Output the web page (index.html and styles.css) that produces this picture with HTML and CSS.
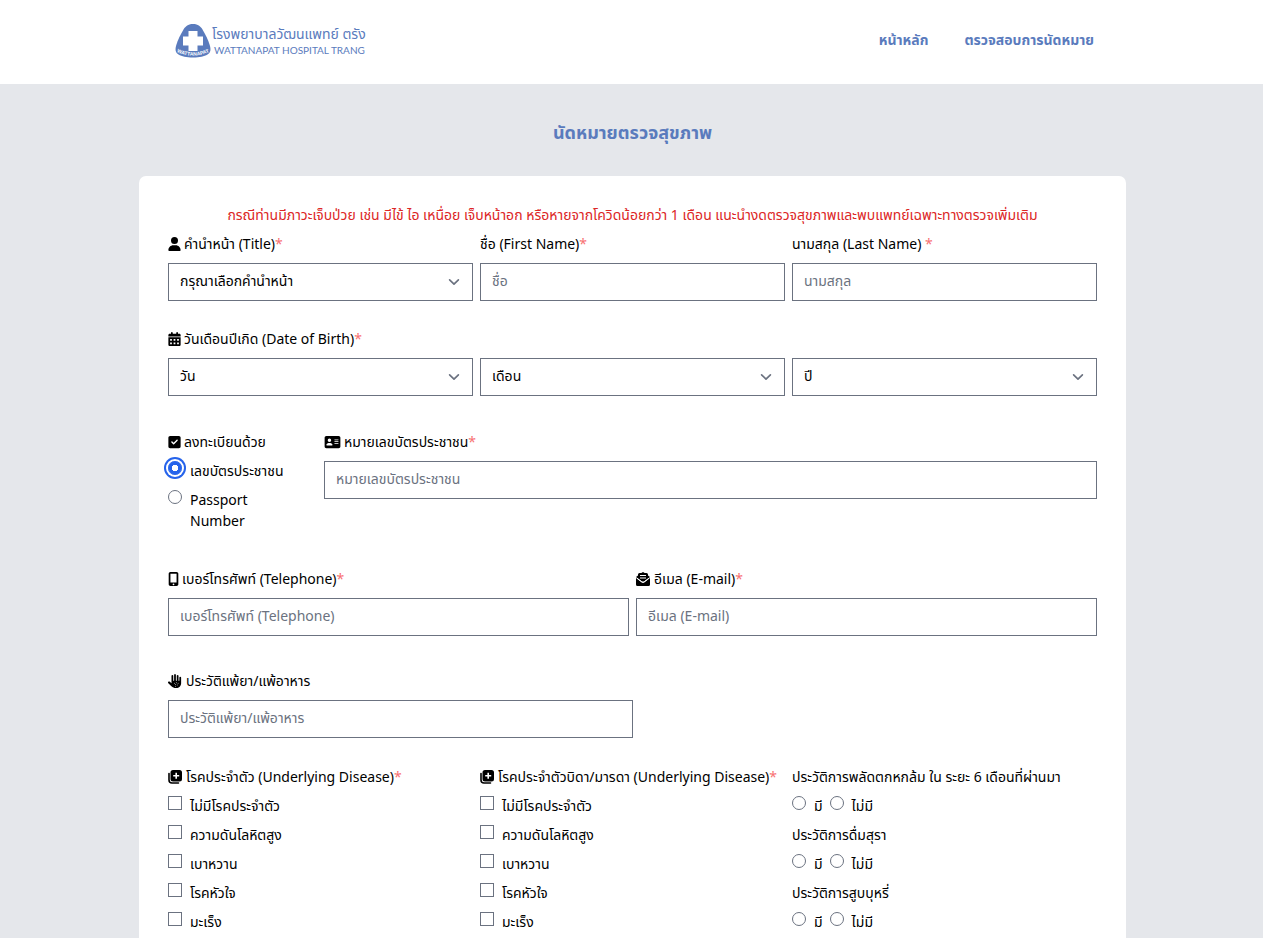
FILE: index.html
```html
<!DOCTYPE html>
<html lang="th">
<head>
<meta charset="utf-8">
<meta name="viewport" content="width=device-width, initial-scale=1">
<title>นัดหมายตรวจสุขภาพ</title>
<link rel="stylesheet" href="styles.css">
</head>
<body>
<svg class="sprite" aria-hidden="true">
  <symbol id="plus-copy" viewBox="0 0 14 14">
    <path d="M1 3.500v6.500A3 3 0 0 0 4 13H10.500" fill="none" stroke="currentColor" stroke-width="1.600" stroke-linecap="round"/>
    <path fill-rule="evenodd" d="M5 0h6.500a2.500 2.500 0 0 1 2.500 2.500v6.500a2.500 2.500 0 0 1-2.500 2.500H5a2.500 2.500 0 0 1-2.500-2.500V2.500A2.500 2.500 0 0 1 5 0zM7.400 2.800v2.200H5.200v1.600h2.200v2.200h1.600v-2.200h2.200V5H9V2.800z"/>
  </symbol>
</svg>
<header class="header">
  <a class="logo" href="#">
    <svg class="emblem" viewBox="0 0 36 34" aria-hidden="true">
      <path class="emblem-shape" d="M18 0c4 0 7 1.500 9.500 5.500C30.500 10.500 33.500 16.500 35 22c1 4 .5 6.500-2.500 8.500C29 32.500 25 33.500 18 33.500S7 32.500 3.500 30.500C.5 28.500 0 26 1 22 2.500 16.500 5.500 10.500 8.500 5.500 11 1.500 14 0 18 0z"/>
      <path class="emblem-cross" d="M13.500 7h9v5.500H28v9h-5.500V27h-9v-5.500H8v-9h5.500z"/>
      <path id="arc" d="M3 28.500Q18 35 33 28.500" fill="none"/>
      <text class="emblem-text"><textPath href="#arc" startOffset="50%" text-anchor="middle">WATTANAPAT</textPath></text>
    </svg>
    <span class="wordmark">
      <span class="wordmark-th">โรงพยาบาลวัฒนแพทย์ ตรัง</span>
      <span class="wordmark-en">WATTANAPAT HOSPITAL TRANG</span>
    </span>
  </a>
  <nav class="nav">
    <a href="#">หน้าหลัก</a>
    <a href="#">ตรวจสอบการนัดหมาย</a>
  </nav>
</header>
<main class="main">
  <h1 class="title">นัดหมายตรวจสุขภาพ</h1>
  <form class="card">
    <p class="notice">กรณีท่านมีภาวะเจ็บป่วย เช่น มีไข้ ไอ เหนื่อย เจ็บหน้าอก หรือหายจากโควิดน้อยกว่า 1 เดือน แนะนำงดตรวจสุขภาพและพบแพทย์เฉพาะทางตรวจเพิ่มเติม</p>

    <div class="row thirds">
      <div class="field">
        <label class="label" for="title"><svg class="icon" viewBox="0 0 448 512"><path d="M224 256A128 128 0 1 0 224 0a128 128 0 1 0 0 256zm-45.700 48C79.800 304 0 383.800 0 482.300C0 498.700 13.300 512 29.700 512H418.300c16.400 0 29.700-13.300 29.700-29.700C448 383.800 368.200 304 269.700 304H178.300z"/></svg>คำนำหน้า (Title)<span class="req">*</span></label>
        <select class="control" id="title"><option>กรุณาเลือกคำนำหน้า</option></select>
      </div>
      <div class="field">
        <label class="label" for="first">ชื่อ (First Name)<span class="req">*</span></label>
        <input class="control" id="first" type="text" placeholder="ชื่อ">
      </div>
      <div class="field">
        <label class="label" for="last">นามสกุล (Last Name) <span class="req">*</span></label>
        <input class="control" id="last" type="text" placeholder="นามสกุล">
      </div>
    </div>

    <div class="field birth">
      <label class="label" for="day"><svg class="icon" viewBox="0 0 448 512"><path fill-rule="evenodd" d="M128 0c17.700 0 32 14.300 32 32V64H288V32c0-17.700 14.300-32 32-32s32 14.300 32 32V64h48c26.500 0 48 21.500 48 48v48H0V112C0 85.500 21.500 64 48 64H96V32c0-17.700 14.300-32 32-32zM0 192H448V464c0 26.500-21.500 48-48 48H48c-26.500 0-48-21.500-48-48zM64 256v64h64v-64zM192 256v64h64v-64zM320 256v64h64v-64zM64 384v64h64v-64zM192 384v64h64v-64zM320 384v64h64v-64z"/></svg>วันเดือนปีเกิด (Date of Birth)<span class="req">*</span></label>
      <div class="thirds">
        <select class="control" id="day"><option>วัน</option></select>
        <select class="control" aria-label="เดือน"><option>เดือน</option></select>
        <select class="control" aria-label="ปี"><option>ปี</option></select>
      </div>
    </div>

    <div class="row identity">
      <fieldset class="options narrow">
        <legend class="label"><svg class="icon" viewBox="0 0 448 512"><path d="M64 32C28.700 32 0 60.700 0 96V416c0 35.300 28.700 64 64 64H384c35.300 0 64-28.700 64-64V96c0-35.300-28.700-64-64-64H64zM337 209L209 337c-9.400 9.400-24.600 9.400-33.900 0l-64-64c-9.400-9.400-9.400-24.600 0-33.900s24.600-9.400 33.900 0l47 47L303 175c9.400-9.400 24.600-9.400 33.900 0s9.400 24.600 0 33.900z"/></svg>ลงทะเบียนด้วย</legend>
        <label class="option"><input type="radio" name="idtype" checked>เลขบัตรประชาชน</label>
        <label class="option"><input type="radio" name="idtype">Passport Number</label>
      </fieldset>
      <div class="field">
        <label class="label" for="idno"><svg class="icon icon-wide" viewBox="0 0 576 512"><path d="M64 32C28.700 32 0 60.700 0 96V416c0 35.300 28.700 64 64 64H512c35.300 0 64-28.700 64-64V96c0-35.300-28.700-64-64-64H64zm80 256h64c44.200 0 80 35.800 80 80c0 8.800-7.200 16-16 16H80c-8.800 0-16-7.200-16-16c0-44.200 35.800-80 80-80zm-32-96a64 64 0 1 1 128 0 64 64 0 1 1 -128 0zm256-32H496c8.800 0 16 7.200 16 16s-7.200 16-16 16H368c-8.800 0-16-7.200-16-16s7.200-16 16-16zm0 64H496c8.800 0 16 7.200 16 16s-7.200 16-16 16H368c-8.800 0-16-7.200-16-16s7.200-16 16-16zm0 64H496c8.800 0 16 7.200 16 16s-7.200 16-16 16H368c-8.800 0-16-7.200-16-16s7.200-16 16-16z"/></svg>หมายเลขบัตรประชาชน<span class="req">*</span></label>
        <input class="control" id="idno" type="text" placeholder="หมายเลขบัตรประชาชน">
      </div>
    </div>

    <div class="row halves">
      <div class="field">
        <label class="label" for="tel"><svg class="icon icon-slim" viewBox="0 0 384 512"><path fill-rule="evenodd" d="M16 64C16 28.700 44.700 0 80 0H304c35.300 0 64 28.700 64 64V448c0 35.300-28.700 64-64 64H80c-35.300 0-64-28.700-64-64zM224 448a32 32 0 1 0 -64 0 32 32 0 1 0 64 0zM304 64H80V384H304z"/></svg>เบอร์โทรศัพท์ (Telephone)<span class="req">*</span></label>
        <input class="control" id="tel" type="tel" placeholder="เบอร์โทรศัพท์ (Telephone)">
      </div>
      <div class="field">
        <label class="label" for="email"><svg class="icon icon-square" viewBox="0 0 14 14"><path d="M0 6v6.500A1.500 1.500 0 0 0 1.500 14h11a1.500 1.500 0 0 0 1.500-1.500V6L8.500 10.200a2.500 2.500 0 0 1-3 0z"/><path d="M0 5L2 3.500V6.500zM14 5L12 3.500V6.500zM4.500 1.500L7 0l2.500 1.500z"/><path fill-rule="evenodd" d="M3.500 1h7A1.500 1.500 0 0 1 12 2.500V6.500L8 9.500a1.700 1.700 0 0 1-2 0L2 6.500V2.500A1.500 1.500 0 0 1 3.500 1zM4 3v1h6V3zM4 5.500v1h6v-1z"/><path class="cut-line" d="M1 6.200L5.700 9.800a2.200 2.200 0 0 0 2.600 0L13 6.200"/></svg>อีเมล (E-mail)<span class="req">*</span></label>
        <input class="control" id="email" type="email" placeholder="อีเมล (E-mail)">
      </div>
    </div>

    <div class="field allergy">
      <label class="label" for="allergy"><svg class="icon icon-square" viewBox="0 0 512 512"><path d="M288 32c0-17.700-14.300-32-32-32s-32 14.300-32 32V240c0 8.800-7.200 16-16 16s-16-7.200-16-16V64c0-17.700-14.300-32-32-32s-32 14.300-32 32V336c0 1.500 0 3.100 .1 4.600L67.600 283c-16-15.200-41.300-14.600-56.600 1.400s-14.600 41.300 1.400 56.600L124.800 448c43.100 41.100 100.400 64 160 64H304c97.200 0 176-78.800 176-176V128c0-17.700-14.300-32-32-32s-32 14.300-32 32V240c0 8.800-7.200 16-16 16s-16-7.200-16-16V64c0-17.700-14.300-32-32-32s-32 14.300-32 32V240c0 8.800-7.200 16-16 16s-16-7.200-16-16V32z"/><g class="cut"><circle cx="240" cy="336" r="16"/><circle cx="304" cy="320" r="16"/><circle cx="368" cy="336" r="16"/><circle cx="272" cy="384" r="16"/><circle cx="336" cy="400" r="16"/><circle cx="272" cy="448" r="16"/></g></svg>ประวัติแพ้ยา/แพ้อาหาร</label>
      <input class="control" id="allergy" type="text" placeholder="ประวัติแพ้ยา/แพ้อาหาร">
    </div>

    <div class="thirds history">
      <fieldset class="options">
        <legend class="label"><svg class="icon icon-square"><use href="#plus-copy"/></svg>โรคประจำตัว (Underlying Disease)<span class="req">*</span></legend>
        <label class="option"><input type="checkbox">ไม่มีโรคประจำตัว</label>
        <label class="option"><input type="checkbox">ความดันโลหิตสูง</label>
        <label class="option"><input type="checkbox">เบาหวาน</label>
        <label class="option"><input type="checkbox">โรคหัวใจ</label>
        <label class="option"><input type="checkbox">มะเร็ง</label>
      </fieldset>
      <fieldset class="options">
        <legend class="label"><svg class="icon icon-square"><use href="#plus-copy"/></svg>โรคประจำตัวบิดา/มารดา (Underlying Disease)<span class="req">*</span></legend>
        <label class="option"><input type="checkbox">ไม่มีโรคประจำตัว</label>
        <label class="option"><input type="checkbox">ความดันโลหิตสูง</label>
        <label class="option"><input type="checkbox">เบาหวาน</label>
        <label class="option"><input type="checkbox">โรคหัวใจ</label>
        <label class="option"><input type="checkbox">มะเร็ง</label>
      </fieldset>
      <div class="questions">
        <fieldset class="options">
          <legend class="label">ประวัติการพลัดตกหกล้ม ใน ระยะ 6 เดือนที่ผ่านมา</legend>
          <div class="pair">
            <label class="option"><input type="radio" name="fall">มี</label>
            <label class="option"><input type="radio" name="fall">ไม่มี</label>
          </div>
        </fieldset>
        <fieldset class="options">
          <legend class="label">ประวัติการดื่มสุรา</legend>
          <div class="pair">
            <label class="option"><input type="radio" name="alcohol">มี</label>
            <label class="option"><input type="radio" name="alcohol">ไม่มี</label>
          </div>
        </fieldset>
        <fieldset class="options">
          <legend class="label">ประวัติการสูบบุหรี่</legend>
          <div class="pair">
            <label class="option"><input type="radio" name="smoke">มี</label>
            <label class="option"><input type="radio" name="smoke">ไม่มี</label>
          </div>
        </fieldset>
      </div>
    </div>
  </form>
</main>
</body>
</html>
```
FILE: styles.css
```css
*, *::before, *::after { box-sizing: border-box; }

body {
  margin: 0;
  background: #e5e7eb;
  color: #000;
  font: 14px/21px "Noto Sans", "Noto Sans Thai", sans-serif;
}

.sprite { display: none; }

.header {
  display: flex;
  justify-content: space-between;
  align-items: flex-start;
  padding: 24px 169px 26px 175px;
  background: #fff;
}

.logo {
  display: flex;
  gap: 1px;
  color: #5a7bbd;
  text-decoration: none;
}
.emblem { width: 36px; height: 34px; }
.emblem-shape { fill: #5a7bbd; }
.emblem-cross { fill: #fff; }
.emblem-text { fill: #fff; font: bold 5px "Liberation Sans", sans-serif; }
.wordmark { display: flex; flex-direction: column; }
.wordmark-th { font-size: 14px; line-height: 20px; }
.wordmark-en { padding-left: 2px; font: 10px/12px Lato, sans-serif; }

.nav { display: flex; gap: 36px; padding-top: 5px; }
.nav a { color: #5a7bbd; font-weight: 700; text-decoration: none; }

.main { padding: 36px 137px 0 139px; }
.title {
  margin: 0 0 31px;
  color: #5a7bbd;
  font-size: 18px;
  line-height: 25px;
  font-weight: 700;
  text-align: center;
}

.card {
  padding: 28px 29px;
  border-radius: 7px;
  background: #fff;
}
.notice { margin: 0 0 8px; color: #dc2626; text-align: center; }

.thirds { display: grid; grid-template-columns: repeat(3, minmax(0, 1fr)); gap: 7px; }
.halves { display: grid; grid-template-columns: repeat(2, minmax(0, 1fr)); gap: 7px; }
.identity { display: grid; grid-template-columns: minmax(0, 149fr) minmax(0, 773fr); gap: 7px; }

.field { display: flex; flex-direction: column; gap: 9px; }
.row { margin-bottom: 27px; }
.birth { margin-bottom: 35px; }
.identity { margin-bottom: 37px; }
.halves { margin-bottom: 34px; }
.allergy { width: 50%; margin-bottom: 28px; }

.label { display: block; padding: 0; white-space: nowrap; }
.req { color: #f87171; }
.icon {
  width: 13px;
  height: 14px;
  margin-right: 3px;
  vertical-align: -2px;
  fill: currentColor;
}
.icon-wide { width: 17px; }
.icon-slim { width: 11px; }
.icon-square { width: 14px; margin-right: 4px; }
.cut { fill: #fff; }
.cut-line { fill: none; stroke: #fff; }

.control {
  width: 100%;
  height: 38px;
  margin: 0;
  padding: 0 11px 3px;
  border: 1px solid #6b7280;
  border-radius: 0;
  background-color: #fff;
  color: #000;
  font: inherit;
}
.control::placeholder { color: #6b7280; opacity: 1; }
select.control {
  appearance: none;
  padding-bottom: 4px;
  background-image: url("data:image/svg+xml,%3Csvg xmlns='http://www.w3.org/2000/svg' fill='none' viewBox='0 0 20 20'%3E%3Cpath stroke='%236b7280' stroke-linecap='round' stroke-linejoin='round' stroke-width='1.5' d='M6 8l4 4 4-4'/%3E%3C/svg%3E");
  background-position: right 7px center;
  background-repeat: no-repeat;
  background-size: 22px 22px;
}

.options { min-width: 0; margin: 0; padding: 0; border: 0; }
.options .label { margin-bottom: 8px; }
.option { display: flex; align-items: flex-start; gap: 8px; }
.option + .option { margin-top: 8px; }
.narrow { padding-right: 29px; }
.pair { display: flex; gap: 7px; }
.pair .option { margin-top: 0; }
.questions { display: flex; flex-direction: column; gap: 8px; }

.option input {
  flex: none;
  appearance: none;
  width: 14px;
  height: 14px;
  margin: 1px 0 0;
  border: 1px solid #6b7280;
  background: #fff;
}
.option input[type="radio"] { border-radius: 50%; }
.option input[type="radio"]:checked {
  border-color: #2563eb;
  background: radial-gradient(circle, #fff 0 3px, #2563eb 3px);
  box-shadow: 0 0 0 2px #fff, 0 0 0 4px #2563eb;
}
```
